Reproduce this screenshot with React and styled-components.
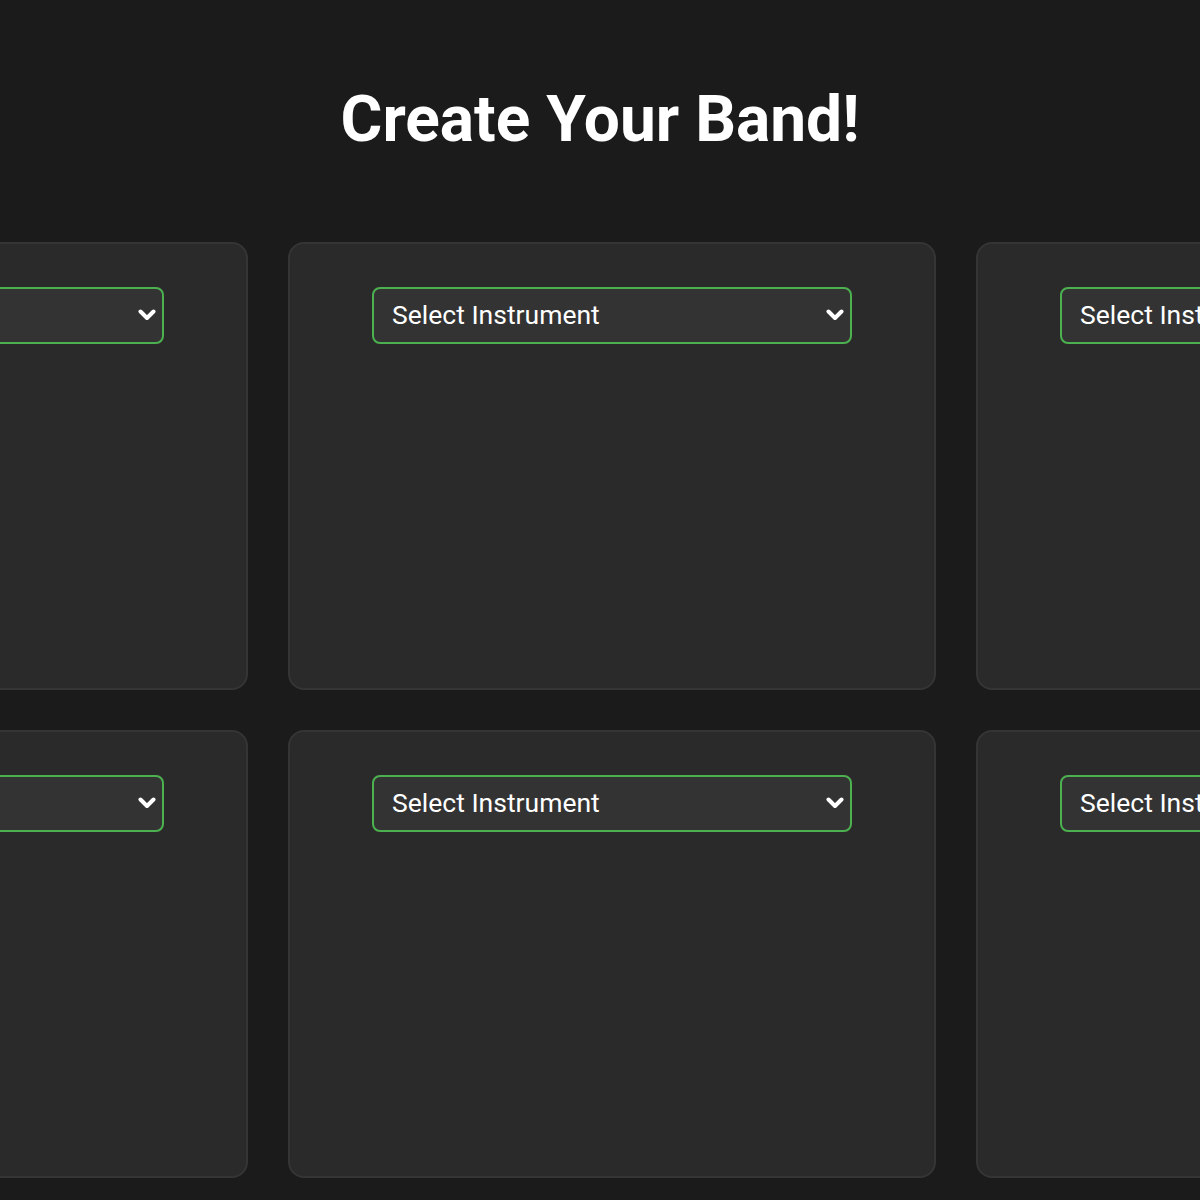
import React from "react";
import styled, { createGlobalStyle } from "styled-components";

const GlobalStyle = createGlobalStyle`
  html, body {
    margin: 0;
    padding: 0;
    background: #1b1b1b;
    font-family: Roboto, "Liberation Sans", sans-serif;
    overflow: hidden;
  }
`;

const Page = styled.div`
  width: 1200px;
  height: 1200px;
  overflow: hidden;
  background: #1b1b1b;
`;

const Title = styled.h1`
  margin: 0;
  padding-top: 82px;
  height: 160px;
  box-sizing: border-box;
  text-align: center;
  color: #ffffff;
  font-size: 64px;
  font-weight: 700;
  line-height: 76px;
`;

const Grid = styled.div`
  display: grid;
  grid-template-columns: repeat(3, 648px);
  grid-auto-rows: 448px;
  gap: 40px;
  margin-top: 82px;
  margin-left: -400px;
  width: 2024px;
`;

const Card = styled.div`
  box-sizing: border-box;
  background: #2a2a2a;
  border: 2px solid #353535;
  border-radius: 16px;
  padding-top: 43px;
  display: flex;
  justify-content: center;
  align-items: flex-start;
`;

const SelectWrap = styled.div`
  position: relative;
  width: 480px;
  height: 57px;
`;

const Select = styled.select`
  appearance: none;
  -webkit-appearance: none;
  box-sizing: border-box;
  width: 100%;
  height: 100%;
  background: #333333;
  border: 2px solid #4caf50;
  border-radius: 8px;
  color: #ffffff;
  font-family: Roboto, "Liberation Sans", sans-serif;
  font-size: 26.5px;
  padding: 0 18px 2px;
  outline: none;
`;

const Chevron = styled.svg`
  position: absolute;
  right: 8px;
  top: 22px;
  pointer-events: none;
`;

function InstrumentSlot() {
  return (
    <Card>
      <SelectWrap>
        <Select defaultValue="">
          <option value="">Select Instrument</option>
          <option value="guitar">Guitar</option>
          <option value="bass">Bass</option>
          <option value="drums">Drums</option>
          <option value="keys">Keys</option>
          <option value="vocals">Vocals</option>
        </Select>
        <Chevron width="18" height="12" viewBox="0 0 18 12">
          <polyline
            points="2.5,2.5 9,9 15.5,2.5"
            fill="none"
            stroke="#ffffff"
            strokeWidth="4"
            strokeLinecap="round"
            strokeLinejoin="round"
          />
        </Chevron>
      </SelectWrap>
    </Card>
  );
}

export default function App() {
  const slots = [0, 1, 2, 3, 4, 5];
  return (
    <Page>
      <GlobalStyle />
      <Title>Create Your Band!</Title>
      <Grid>
        {slots.map((i) => (
          <InstrumentSlot key={i} />
        ))}
      </Grid>
    </Page>
  );
}
